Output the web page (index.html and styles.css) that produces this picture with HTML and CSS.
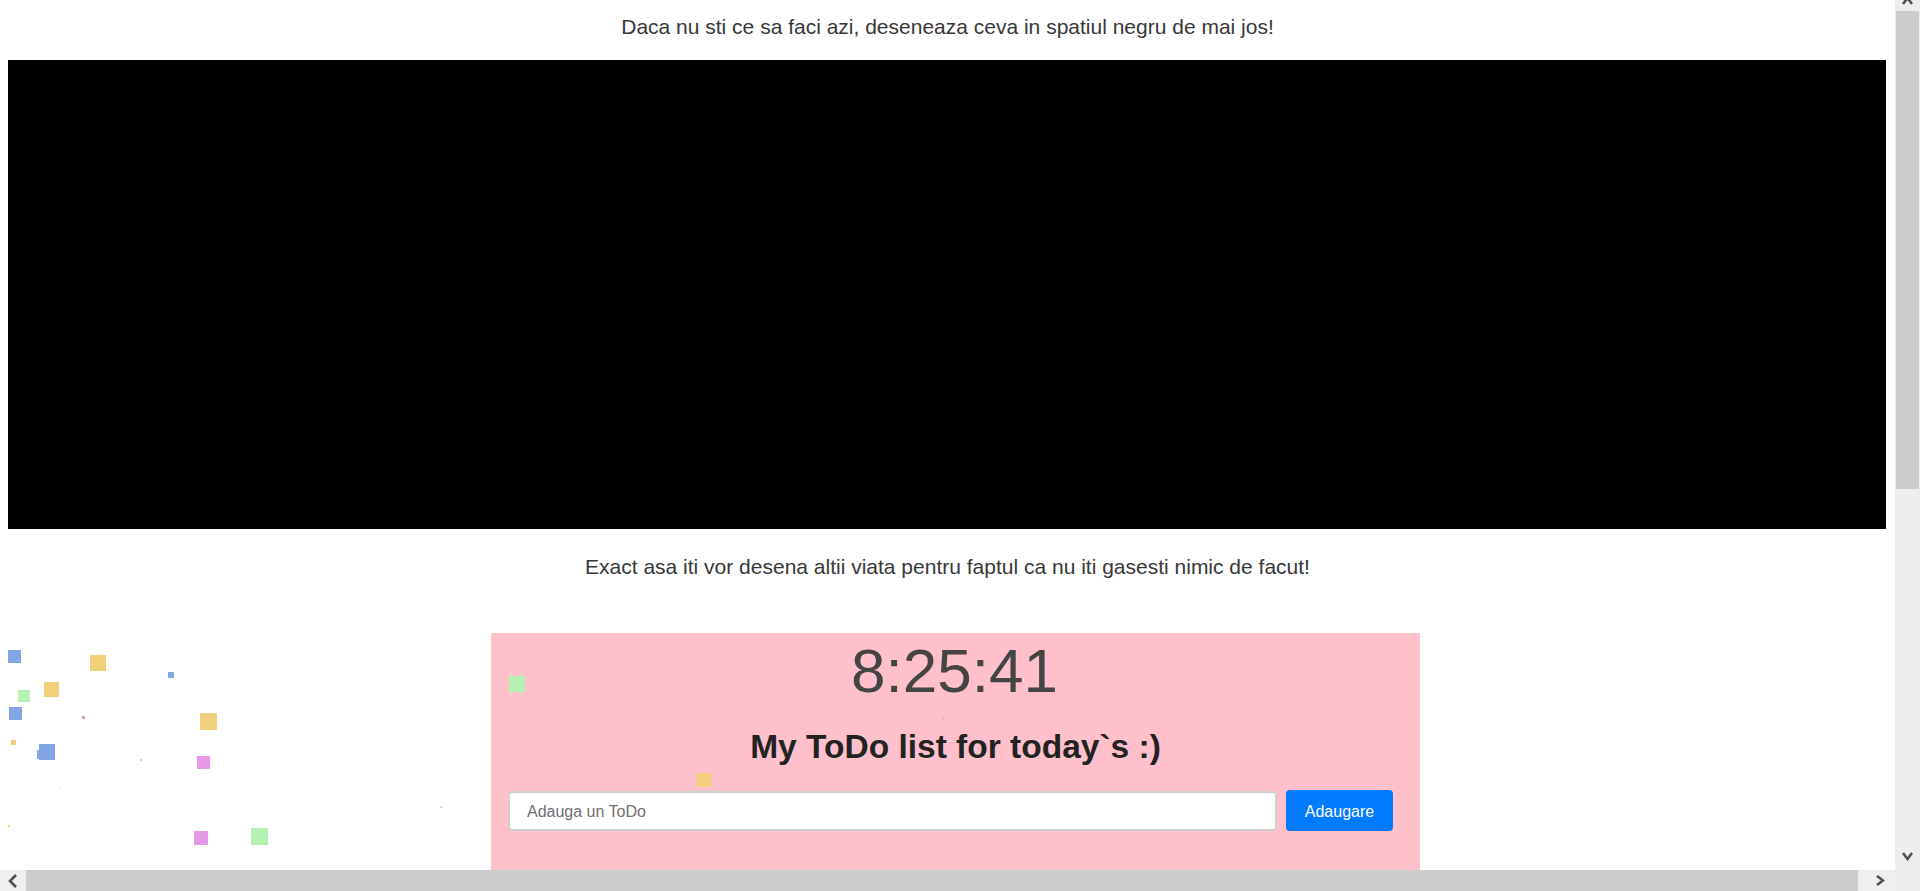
FILE: index.html
```html
<!DOCTYPE html>
<html lang="ro">
<head>
<meta charset="utf-8">
<title>ToDo</title>
<link rel="stylesheet" href="styles.css">
</head>
<body>
<div class="page">
  <p class="intro">Daca nu sti ce sa faci azi, deseneaza ceva in spatiul negru de mai jos!</p>
  <div class="board"></div>
  <p class="outro">Exact asa iti vor desena altii viata pentru faptul ca nu iti gasesti nimic de facut!</p>
  <section class="todo">
    <div class="clock">8:25:41</div>
    <h2 class="todo-title">My ToDo list for today`s :)</h2>
    <form class="todo-form">
      <input class="todo-input" type="text" placeholder="Adauga un ToDo">
      <button class="todo-btn" type="button">Adaugare</button>
    </form>
  </section>
</div>

<div class="confetti">
  <span class="bit blue" style="left:8px;top:650px;width:13px;height:13px"></span>
  <span class="bit yellow" style="left:90px;top:655px;width:16px;height:16px"></span>
  <span class="bit blue" style="left:168px;top:672px;width:6px;height:6px"></span>
  <span class="bit yellow" style="left:44px;top:682px;width:15px;height:15px"></span>
  <span class="bit green" style="left:18px;top:690px;width:12px;height:12px"></span>
  <span class="bit blue" style="left:9px;top:707px;width:13px;height:13px"></span>
  <span class="bit rose" style="left:82px;top:716px;width:3px;height:3px"></span>
  <span class="bit yellow" style="left:200px;top:713px;width:17px;height:17px"></span>
  <span class="bit yellow" style="left:11px;top:740px;width:5px;height:5px"></span>
  <span class="bit blue" style="left:37px;top:750px;width:10px;height:9px"></span>
  <span class="bit blue" style="left:39px;top:744px;width:16px;height:16px"></span>
  <span class="bit yellow" style="left:140px;top:759px;width:2px;height:2px"></span>
  <span class="bit magenta" style="left:197px;top:756px;width:13px;height:13px"></span>
  <span class="bit gray" style="left:59px;top:787px;width:1px;height:1px"></span>
  <span class="bit green" style="left:440px;top:806px;width:2px;height:2px"></span>
  <span class="bit yellow" style="left:8px;top:825px;width:2px;height:2px"></span>
  <span class="bit magenta" style="left:194px;top:831px;width:14px;height:14px"></span>
  <span class="bit green" style="left:251px;top:828px;width:17px;height:17px"></span>
  <span class="bit green" style="left:509px;top:676px;width:16px;height:16px"></span>
  <span class="bit blue" style="left:943px;top:718px;width:1px;height:1px"></span>
  <span class="bit yellow" style="left:697px;top:773px;width:14px;height:14px"></span>
</div>

<div class="vscroll">
  <svg class="arrow-up" width="11" height="9" viewBox="0 0 11 9"><polyline points="1,8 5.5,2 10,8" fill="none" stroke="#505050" stroke-width="2.6"/></svg>
  <div class="vthumb"></div>
  <svg class="arrow-down" width="11" height="9" viewBox="0 0 11 9"><polyline points="1,1 5.5,7 10,1" fill="none" stroke="#505050" stroke-width="2.6"/></svg>
</div>
<div class="hscroll">
  <div class="hbtn hbtn-left"><svg width="9" height="14" viewBox="0 0 9 14"><polyline points="8,1 2,7 8,13" fill="none" stroke="#505050" stroke-width="2.6"/></svg></div>
  <div class="hthumb"></div>
  <div class="hbtn hbtn-right"><svg width="9" height="11" viewBox="0 0 9 11"><polyline points="1,1 7,5.5 1,10" fill="none" stroke="#505050" stroke-width="2.6"/></svg></div>
</div>
</body>
</html>
```

FILE: styles.css
```css
html, body {
  margin: 0;
  padding: 0;
  overflow: hidden;
  background: #fff;
}

body {
  font-family: "Liberation Sans", Arial, sans-serif;
  color: #333;
}

.page {
  width: 1895px;
}

.intro,
.outro {
  margin: 0;
  text-align: center;
  font-size: 21px;
  line-height: 24px;
  color: #383838;
}

.intro {
  padding-top: 15px;
}

.board {
  margin: 21px 0 0 8px;
  width: 1878px;
  height: 469px;
  background: #000;
}

.outro {
  margin-top: 26px;
}

.todo {
  margin: 54px 0 0 491px;
  width: 929px;
  height: 320px;
  background: #ffc0cb;
  box-sizing: border-box;
  padding: 0 27px 0 17px;
}

.clock {
  text-align: center;
  font-size: 62px;
  line-height: 76px;
  color: #444;
  padding-left: 8px;
}

.todo-title {
  margin: 18px 0 0;
  text-align: center;
  font-size: 33.5px;
  line-height: 40px;
  font-weight: bold;
  color: #222;
  padding-left: 10px;
}

.todo-form {
  margin: 23px 0 0;
  display: flex;
  align-items: flex-start;
  gap: 9px;
}

.todo-input {
  flex: 1;
  margin-top: 1px;
  height: 40px;
  box-sizing: border-box;
  border: 2px solid #cfcfcf;
  border-radius: 4px;
  padding: 2px 0 0 17px;
  font-family: "Liberation Sans", Arial, sans-serif;
  font-size: 16px;
  color: #495057;
  background: #fff;
  outline: none;
}

.todo-input::placeholder {
  color: #707070;
}

.todo-btn {
  width: 107px;
  height: 41px;
  border: 0;
  border-radius: 4px;
  background: #007bff;
  color: #fff;
  font-family: "Liberation Sans", Arial, sans-serif;
  font-size: 16px;
  padding: 2px 0 0;
}

.confetti {
  position: absolute;
  left: 0;
  top: 0;
  width: 1895px;
  height: 891px;
  pointer-events: none;
}

.bit {
  position: absolute;
  display: block;
}

.blue { background: #80a6e4; }
.yellow { background: #f1cf7b; }
.green { background: #b4f1b2; }
.magenta { background: #e799e9; }
.rose { background: #f08bb0; }
.gray { background: #cccccc; }

.vscroll {
  position: fixed;
  top: 0;
  right: 0;
  width: 25px;
  height: 891px;
  background: #eeeeee;
}

.arrow-up {
  position: absolute;
  left: 7px;
  top: -4px;
}

.vthumb {
  position: absolute;
  left: 1px;
  top: 11px;
  width: 23px;
  height: 478px;
  background: #cccccc;
}

.arrow-down {
  position: absolute;
  left: 7px;
  top: 852px;
}

.hscroll {
  position: fixed;
  left: 0;
  bottom: 0;
  width: 1895px;
  height: 21px;
  background: #eeeeee;
  display: flex;
}

.hbtn {
  display: flex;
  align-items: center;
  background: #efefef;
}

.hbtn-left {
  width: 26px;
  padding-left: 8px;
  box-sizing: border-box;
}

.hbtn-right {
  width: 36px;
  padding-left: 18px;
  box-sizing: border-box;
}

.hthumb {
  width: 1832px;
  height: 21px;
  background: #cccccc;
}
```
